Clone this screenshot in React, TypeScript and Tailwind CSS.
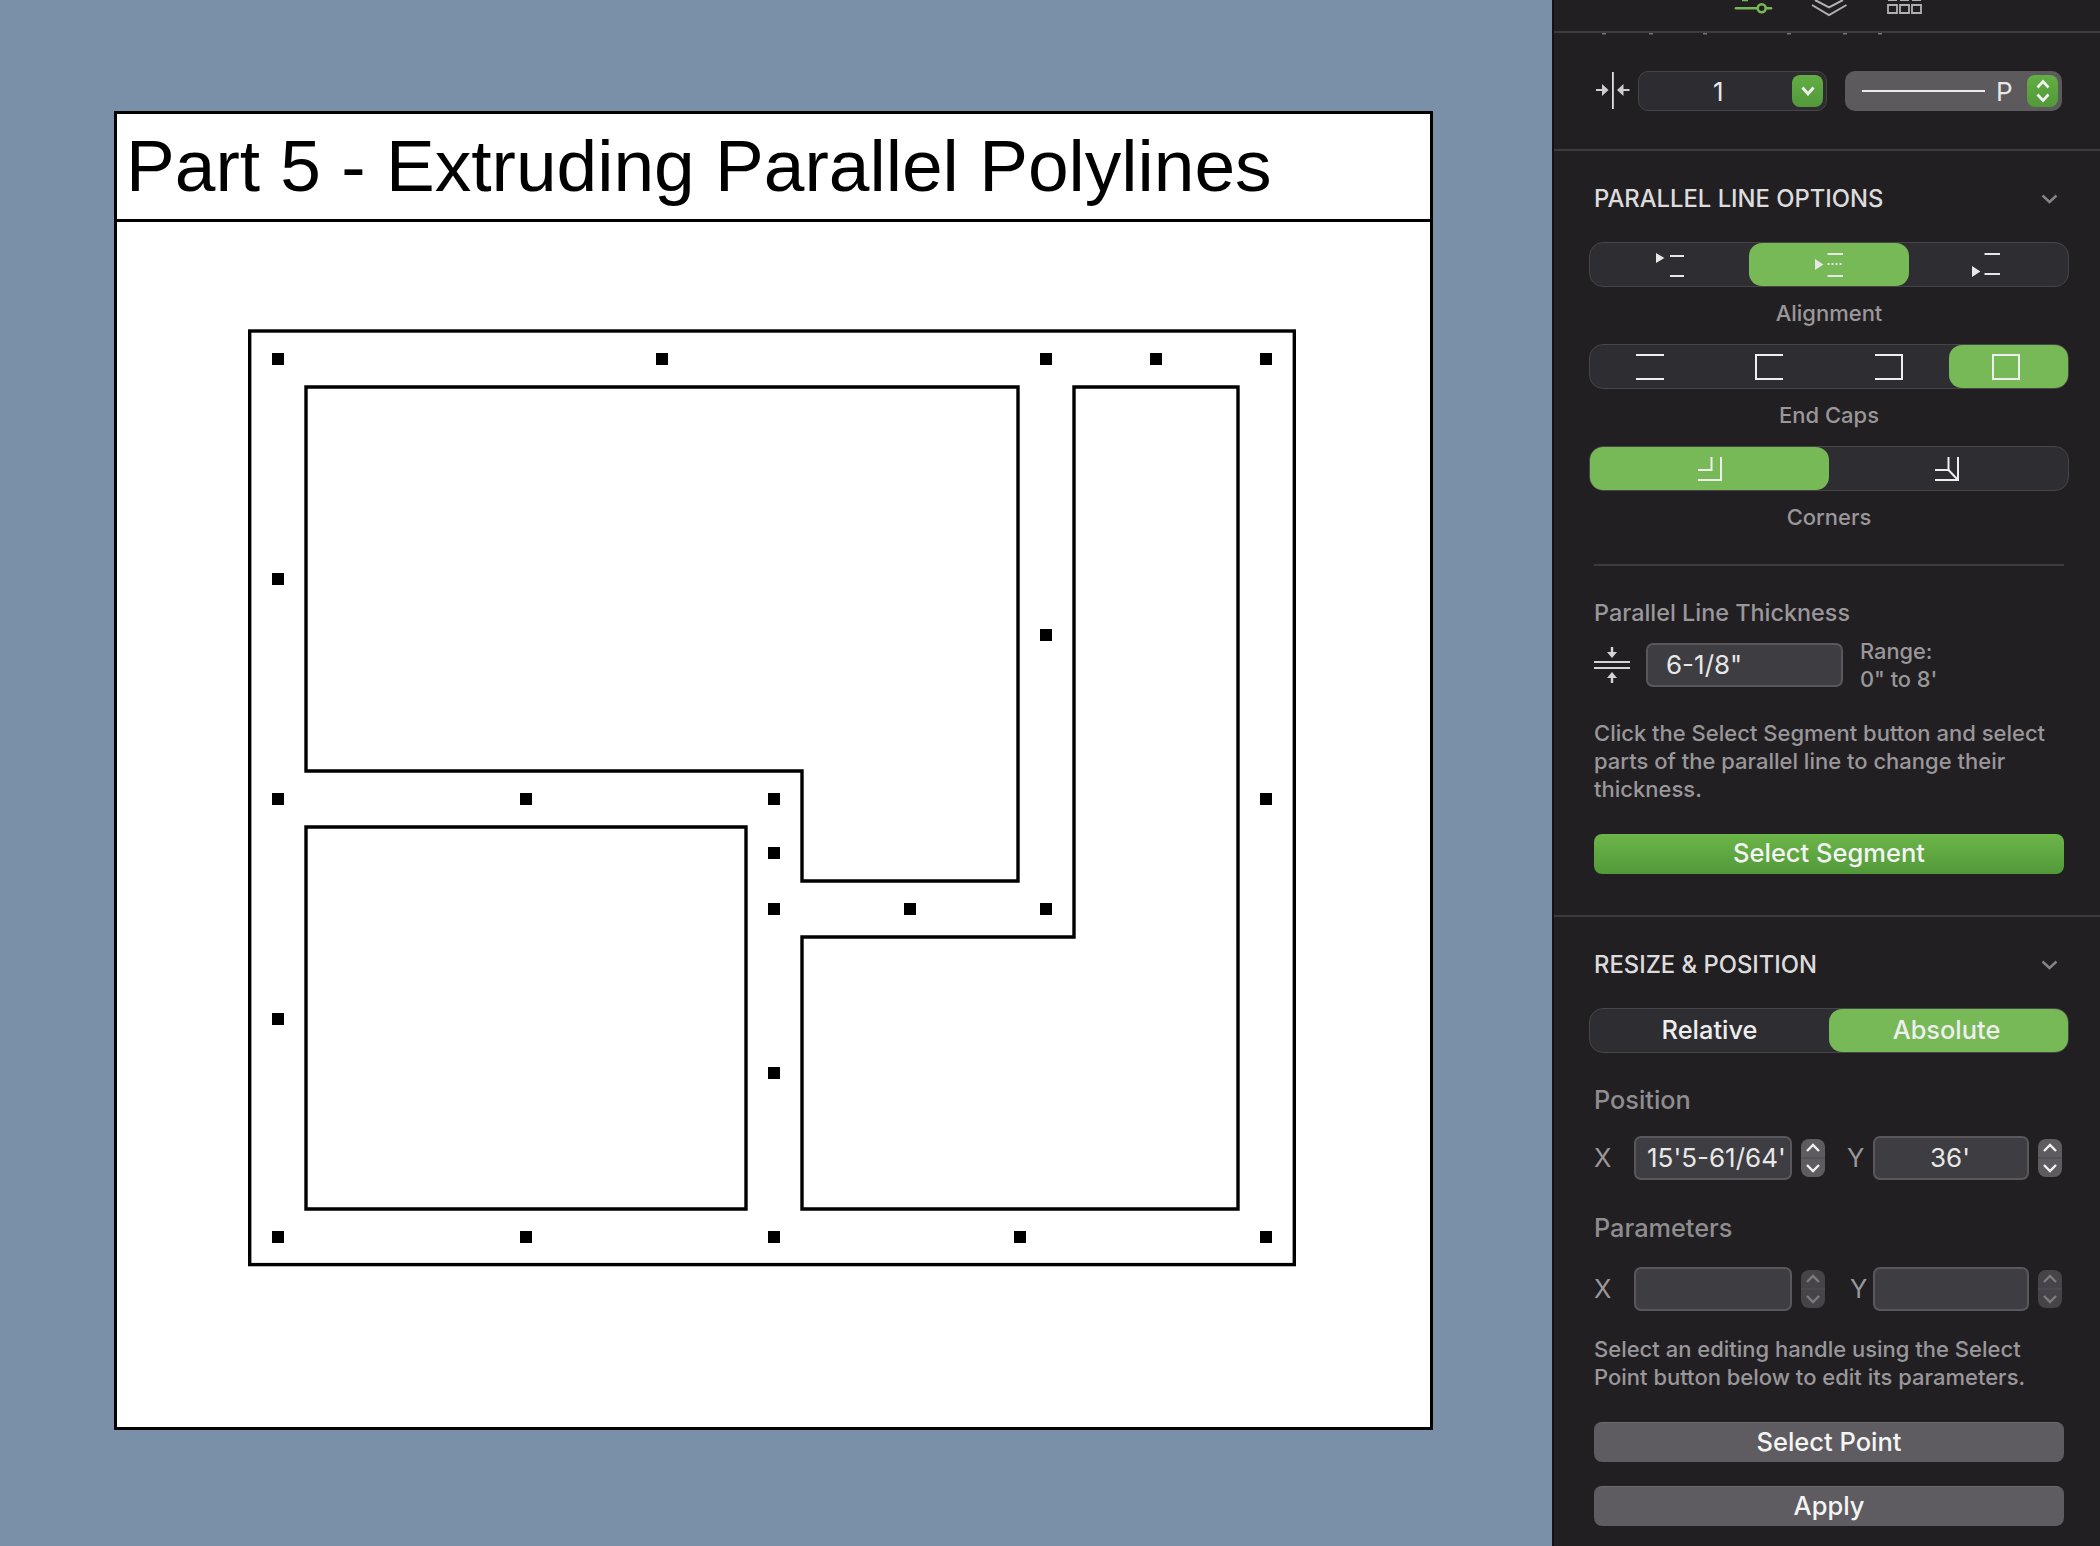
import React from 'react';

const SANS = "font-['Inter',sans-serif]";

// centre points of the editing handles on the plan
const handles: [number, number][] = [
  [278, 359], [662, 359], [1046, 359], [1156, 359], [1266, 359],
  [278, 579], [1046, 635],
  [278, 799], [526, 799], [774, 799], [1266, 799],
  [774, 853], [774, 909], [910, 909], [1046, 909],
  [278, 1019], [774, 1073],
  [278, 1237], [526, 1237], [774, 1237], [1020, 1237], [1266, 1237],
];

const Plan = () => (
  <svg width="1313" height="1204" viewBox="117 222 1313 1204" className="block">
    <g fill="none" stroke="#000" strokeWidth="3.4">
      <rect x="249.7" y="331" width="1044.6" height="933.6" />
      <path d="M306 387H1018V881H802V771H306Z" />
      <path d="M1074 387H1238V1209H802V937H1074Z" />
      <path d="M306 827H746V1209H306Z" />
    </g>
    {handles.map(([x, y]) => (
      <rect key={`${x}-${y}`} x={x - 6} y={y - 6} width="12" height="12" fill="#000" />
    ))}
  </svg>
);

const Chevron = () => (
  <svg width="17" height="10" viewBox="0 0 17 10" fill="none" stroke="#858386" strokeWidth="2.4">
    <path d="M1.500 1.500 8.500 8l7-6.500" />
  </svg>
);

const SectionTitle = ({ children }: { children: React.ReactNode }) => (
  <div className="flex h-[30px] items-center justify-between pl-[40px] pr-[42px]">
    <span className="text-[23.8px] font-medium text-[#dddcdd]">{children}</span>
    <Chevron />
  </div>
);

const Segmented = ({ items, active, className = '' }: { items: React.ReactNode[]; active: number; className?: string }) => (
  <div className={`ml-[35px] mr-[31px] flex h-[45px] rounded-[14px] border border-[#454447] bg-[#2e2d32] ${className}`}>
    {items.map((item, i) => (
      <div
        key={i}
        className={`flex flex-1 items-center justify-center rounded-[13px] text-[25.4px] font-medium text-[#efeeef] ${i === active ? 'bg-[#77b957]' : ''}`}
      >
        <div className={i === items.length - 1 ? 'mr-[4px]' : ''}>{item}</div>
      </div>
    ))}
  </div>
);

const Caption = ({ children }: { children: React.ReactNode }) => (
  <div className="mt-[13px] mb-[18px] h-[26px] pl-[4px] text-center text-[22px] font-medium leading-[26px] text-[#99979a]">{children}</div>
);

const AlignIcon = ({ kind }: { kind: 'left' | 'center' | 'right' }) => (
  <svg width="28" height="43" viewBox="0 0 28 43" fill="#e8e7e8">
    {kind === 'left' && (
      <>
        <path d="M0 10l8.400 5L0 20Z" />
        <rect x="14" y="12" width="14" height="2" />
        <rect x="14" y="32" width="14" height="2" />
      </>
    )}
    {kind === 'center' && (
      <>
        <path d="M0 16l8.400 5.500L0 27Z" />
        <rect x="12.500" y="10" width="15.500" height="2" />
        <rect x="12.500" y="32" width="15.500" height="2" />
        <rect x="12.500" y="20" width="2" height="2" />
        <rect x="16.500" y="20" width="2" height="2" />
        <rect x="20.500" y="20" width="2" height="2" />
        <rect x="24.500" y="20" width="2" height="2" />
      </>
    )}
    {kind === 'right' && (
      <>
        <path d="M0 23l8.400 5.500L0 34Z" />
        <rect x="12.500" y="10" width="15.500" height="2" />
        <rect x="12.500" y="30" width="15.500" height="2" />
      </>
    )}
  </svg>
);

const CapIcon = ({ d }: { d: string }) => (
  <svg width="28" height="26" viewBox="0 0 28 26" fill="none" stroke="#efeeef" strokeWidth="2">
    <path d={d} />
  </svg>
);

const CornerIcon = ({ miter }: { miter?: boolean }) => (
  <svg width="24" height="24" viewBox="0 0 24 24" fill="none" stroke="#efeeef" strokeWidth="2">
    <path d="M0 13H13.500V0M0 23H23V0" />
    {miter && <path d="M13.500 13 23 23" />}
  </svg>
);

const Stepper = ({ dim }: { dim?: boolean }) => (
  <div className={`ml-[9px] h-[38px] w-[24px] shrink-0 rounded-[8px] ${dim ? 'bg-[#464448]' : 'bg-[#5e5c60]'}`}>
    <svg width="24" height="38" viewBox="0 0 24 38" fill="none" strokeWidth="2.4">
      <path d="M0 19H24" stroke={dim ? '#525054' : '#4c4a4e'} strokeWidth="1" />
      <path d="M6 12l6-6 6 6M6 26l6 6 6-6" stroke={dim ? '#7d7b7e' : '#f2f2f2'} />
    </svg>
  </div>
);

const CoordField = ({ label, value, center, gap, width }: { label: string; value?: string; center?: boolean; gap: string; width: string }) => (
  <>
    <span className={`shrink-0 text-[25.500px] leading-none text-[#99979a] ${gap}`}>{label}</span>
    <div
      className={`flex h-[44px] shrink-0 items-center overflow-hidden whitespace-nowrap rounded-[7px] border-2 border-[#59575b] bg-[#3e3d42] text-[26px] text-[#e8e8e8] ${width} ${center ? 'justify-center pr-[2px]' : 'pl-[11px]'}`}
    >
      {value}
    </div>
  </>
);

const GrayButton = ({ children, className = '' }: { children: React.ReactNode; className?: string }) => (
  <div className={`ml-[40px] mr-[36px] flex h-[40px] items-center justify-center rounded-[8px] border-t border-[#6c6a6e] bg-[#5e5c60] text-[25.500px] font-medium text-[#f4f4f4] ${className}`}>
    {children}
  </div>
);

export default function App() {
  return (
    <div className="flex h-[1546px] w-[2100px] overflow-hidden bg-[#7a90a8]">
      {/* drawing sheet */}
      <div className="flex-1 pl-[114px] pt-[111px]">
        <div className="flex h-[1319px] w-[1319px] flex-col border-[3.4px] border-black bg-white">
          <div className="flex h-[108px] shrink-0 items-center whitespace-nowrap border-b-[3.4px] border-black pl-[9px] pb-[2px] font-['Liberation_Sans',sans-serif] text-[73.1px] text-black">
            Part 5 - Extruding Parallel Polylines
          </div>
          <Plan />
        </div>
      </div>

      {/* inspector */}
      <aside className={`flex h-[1546px] w-[548px] shrink-0 flex-col overflow-hidden border-l-[2px] border-[#131214] bg-[#221f22] ${SANS}`}>
        {/* tab icons, scrolled mostly out of view */}
        <div className="h-[31px] shrink-0 pl-[176px]">
          <svg width="200" height="31" viewBox="0 0 200 31" fill="none">
            <g stroke="#77b957" strokeWidth="2.600">
              <path d="M6 8.300H41" strokeLinecap="round" />
              <circle cx="31.700" cy="8.300" r="4" fill="#221f22" />
              <path d="M12 0H18" />
            </g>
            <g stroke="#b2b0b2" strokeWidth="2">
              <path d="M82 5l17 10 17.500-10M85 0l14 7.300L113 0" />
              <path d="M158 5h9v8h-9zM170 5h9v8h-9zM182 5h9v8h-9z" strokeWidth="1.800" />
              <path d="M158 0h9M170 0h9M182 0h9" strokeWidth="1.800" />
            </g>
          </svg>
        </div>
        <div className="relative h-[2px] shrink-0 bg-[#3d3b3e]">
          <svg width="300" height="2" viewBox="0 0 300 2" className="absolute left-[44px] top-[2px]" fill="#77757a">
            <rect x="4" width="4" height="1.500" />
            <rect x="51" width="4" height="1.500" />
            <rect x="105" width="4" height="1.500" />
            <rect x="189" width="4" height="1.500" />
            <rect x="245" width="4" height="1.500" />
            <rect x="280" width="4" height="1.500" />
          </svg>
        </div>

        {/* line count and style */}
        <div className="flex h-[116px] shrink-0 items-center pl-[42px]">
          <svg width="34" height="38" viewBox="0 0 34 38" fill="#cfcecf" className="mr-[8px]">
            <rect x="16" y="0" width="1.800" height="37" fill="#e0dfe0" />
            <path d="M0 17h6v-5l6.500 6-6.500 6v-5H0Z" />
            <path d="M33.500 17h-6v-5l-6.500 6 6.500 6v-5h6Z" />
          </svg>
          <div className="flex h-[40px] w-[189px] items-center justify-between rounded-[10px] border border-[#454447] bg-[#2d2c31] pl-[74px] pr-[3px] text-[26px] text-[#e8e8e8]">
            <span>1</span>
            <div className="flex h-[32px] w-[31px] items-center justify-center rounded-[8px] bg-gradient-to-b from-[#62ae45] to-[#52993a]">
              <svg width="14" height="10" viewBox="0 0 14 10" fill="none" stroke="#f2f2f2" strokeWidth="2.800">
                <path d="M1.500 1.500 7 8l5.500-6.500" />
              </svg>
            </div>
          </div>
          <div className="ml-[18px] flex h-[40px] w-[217px] items-center rounded-[10px] bg-[#5c5a5d] pl-[17px] pr-[4px] text-[26px] text-[#e8e8e8]">
            <div className="h-[2px] w-[123px] bg-[#ececec]" />
            <span className="ml-[11px]">P</span>
            <div className="ml-auto flex h-[32px] w-[31px] items-center justify-center rounded-[8px] bg-gradient-to-b from-[#62ae45] to-[#52993a]">
              <svg width="14" height="24" viewBox="0 0 14 24" fill="none" stroke="#f2f2f2" strokeWidth="2.600">
                <path d="M1.500 8.500 7 2.500l5.500 6M1.500 15.500 7 21.500l5.500-6" />
              </svg>
            </div>
          </div>
        </div>
        <div className="h-[2px] shrink-0 bg-[#3d3b3e]" />

        {/* parallel line options */}
        <div className="shrink-0 pt-[33px]">
          <SectionTitle>PARALLEL LINE OPTIONS</SectionTitle>
          <Segmented
            className="mt-[28px]"
            active={1}
            items={[<AlignIcon kind="left" />, <AlignIcon kind="center" />, <AlignIcon kind="right" />]}
          />
          <Caption>Alignment</Caption>
          <Segmented
            active={3}
            items={[
              <CapIcon d="M0 1H28M0 25H28" />,
              <CapIcon d="M28 1H1V25H28" />,
              <CapIcon d="M0 1H27V25H0" />,
              <CapIcon d="M1 1H27V25H1Z" />,
            ]}
          />
          <Caption>End Caps</Caption>
          <Segmented active={0} items={[<CornerIcon />, <CornerIcon miter />]} />
          <Caption>Corners</Caption>
          <div className="ml-[40px] mr-[36px] mt-[34px] h-[1.500px] bg-[#3d3b3e]" />

          <div className="mt-[33px] pl-[40px] text-[23.400px] font-medium leading-[28px] text-[#99979a]">Parallel Line Thickness</div>
          <div className="mt-[10px] flex items-center pl-[40px]">
            <svg width="36" height="38" viewBox="0 0 36 38" fill="none" className="mr-[16px]">
              <path d="M0 16H36M0 22H36" stroke="#d5d4d5" strokeWidth="1.800" />
              <path d="M18 1v6M18 31v6" stroke="#d5d4d5" strokeWidth="2.400" />
              <path d="M13 6h10l-5 6ZM13 32h10l-5-6Z" fill="#d5d4d5" />
            </svg>
            <div className="flex h-[44px] w-[197px] items-center rounded-[7px] border-2 border-[#59575b] bg-[#3e3d42] pl-[18px] text-[26px] text-[#e8e8e8]">
              6-1/8"
            </div>
            <div className="ml-[17px] text-[21.800px] font-medium leading-[28px] text-[#99979a]">
              Range:
              <br />
              0" to 8'
            </div>
          </div>
          <p className="mt-[26px] w-[510px] pl-[40px] text-[22px] font-medium leading-[28px] text-[#99979a]">
            Click the Select Segment button and select parts of the parallel line to change their thickness.
          </p>
          <div className="ml-[40px] mr-[36px] mt-[31px] flex h-[40px] items-center justify-center rounded-[8px] bg-gradient-to-b from-[#6cb548] to-[#52993a] text-[25.500px] font-medium text-[#f4f4f4]">
            Select Segment
          </div>
        </div>
        <div className="mt-[41px] h-[2px] shrink-0 bg-[#3d3b3e]" />

        {/* resize and position */}
        <div className="shrink-0 pt-[33px]">
          <SectionTitle>RESIZE &amp; POSITION</SectionTitle>
          <Segmented className="mt-[28px]" active={1} items={['Relative', 'Absolute']} />
          <div className="mt-[33px] pl-[40px] text-[25.300px] font-medium leading-[28px] text-[#8f8d90]">Position</div>
          <div className="mt-[22px] flex items-center pl-[40px]">
            <CoordField label="X" value="15'5-61/64'" gap="w-[40px]" width="w-[158px]" />
            <Stepper />
            <CoordField label="Y" value="36'" center gap="ml-[22px] w-[26px]" width="w-[156px]" />
            <Stepper />
          </div>
          <div className="mt-[34px] pl-[40px] text-[25.300px] font-medium leading-[28px] text-[#8f8d90]">Parameters</div>
          <div className="mt-[25px] flex items-center pl-[40px]">
            <CoordField label="X" gap="w-[40px]" width="w-[158px]" />
            <Stepper dim />
            <CoordField label="Y" gap="ml-[25px] w-[23px]" width="w-[156px]" />
            <Stepper dim />
          </div>
          <p className="mt-[24px] w-[510px] pl-[40px] text-[22px] font-medium leading-[28px] text-[#99979a]">
            Select an editing handle using the Select Point button below to edit its parameters.
          </p>
          <GrayButton className="mt-[31px]">Select Point</GrayButton>
          <GrayButton className="mt-[24px]">Apply</GrayButton>
        </div>
      </aside>
    </div>
  );
}
